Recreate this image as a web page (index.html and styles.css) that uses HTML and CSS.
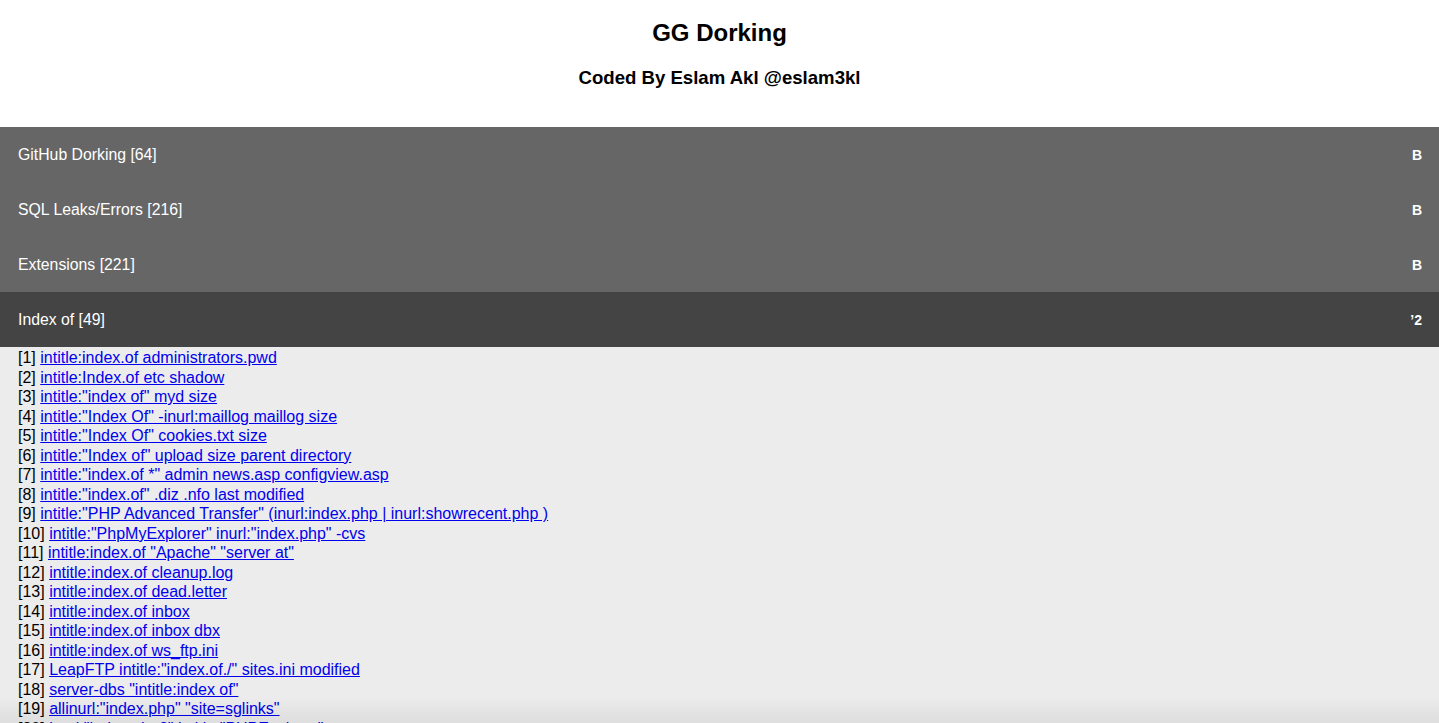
FILE: index.html
```html
<!DOCTYPE html>
<html>
<head>
<meta charset="utf-8">
<title>GG Dorking</title>
<link rel="stylesheet" href="styles.css">
</head>
<body>
<header class="header">
  <h2 class="title">GG Dorking</h2>
  <h3 class="subtitle">Coded By Eslam Akl @eslam3kl</h3>
</header>
<section class="accordion">
  <div class="acc-btn"><span>GitHub Dorking [64]</span><span class="acc-mark">B</span></div>
  <div class="acc-btn"><span>SQL Leaks/Errors [216]</span><span class="acc-mark">B</span></div>
  <div class="acc-btn"><span>Extensions [221]</span><span class="acc-mark">B</span></div>
  <div class="acc-btn active"><span>Index of [49]</span><span class="acc-mark">&rsquo;2</span></div>
  <div class="panel">
    <div class="row">[1] <a href="#">intitle:index.of administrators.pwd</a></div>
    <div class="row">[2] <a href="#">intitle:Index.of etc shadow</a></div>
    <div class="row">[3] <a href="#">intitle:"index of" myd size</a></div>
    <div class="row">[4] <a href="#">intitle:"Index Of" -inurl:maillog maillog size</a></div>
    <div class="row">[5] <a href="#">intitle:"Index Of" cookies.txt size</a></div>
    <div class="row">[6] <a href="#">intitle:"Index of" upload size parent directory</a></div>
    <div class="row">[7] <a href="#">intitle:"index.of *" admin news.asp configview.asp</a></div>
    <div class="row">[8] <a href="#">intitle:"index.of" .diz .nfo last modified</a></div>
    <div class="row">[9] <a href="#">intitle:"PHP Advanced Transfer" (inurl:index.php | inurl:showrecent.php )</a></div>
    <div class="row">[10] <a href="#">intitle:"PhpMyExplorer" inurl:"index.php" -cvs</a></div>
    <div class="row">[11] <a href="#">intitle:index.of "Apache" "server at"</a></div>
    <div class="row">[12] <a href="#">intitle:index.of cleanup.log</a></div>
    <div class="row">[13] <a href="#">intitle:index.of dead.letter</a></div>
    <div class="row">[14] <a href="#">intitle:index.of inbox</a></div>
    <div class="row">[15] <a href="#">intitle:index.of inbox dbx</a></div>
    <div class="row">[16] <a href="#">intitle:index.of ws_ftp.ini</a></div>
    <div class="row">[17] <a href="#">LeapFTP intitle:"index.of./" sites.ini modified</a></div>
    <div class="row">[18] <a href="#">server-dbs "intitle:index of"</a></div>
    <div class="row">[19] <a href="#">allinurl:"index.php" "site=sglinks"</a></div>
    <div class="row">[20] <a href="#">inurl:"index.php?" intitle:"PHPExplorer" -cvs</a></div>
    <div class="row">[21] <a href="#">intitle:index.of .bash_history</a></div>
  </div>
</section>
<div class="bottom-shade"></div>
</body>
</html>
```
FILE: styles.css
```css
html, body {
  margin: 0;
  padding: 0;
  background: #fff;
  font-family: "Liberation Sans", Arial, Helvetica, sans-serif;
  color: #000;
}

.header {
  display: flex;
  flex-direction: column;
  align-items: center;
  padding: 19px 0 38px;
}

.title {
  margin: 0;
  font-size: 24px;
  line-height: 28px;
  font-weight: bold;
}

.subtitle {
  margin: 20px 0 0;
  font-size: 18.6px;
  line-height: 22px;
  font-weight: bold;
}

.accordion {
  display: flex;
  flex-direction: column;
}

.acc-btn {
  display: flex;
  align-items: center;
  justify-content: space-between;
  height: 55px;
  padding: 0 17px 0 18px;
  background: #666;
  color: #fff;
  font-size: 15.8px;
}

.acc-btn.active {
  background: #444;
}

.acc-mark {
  font-weight: bold;
  font-size: 14px;
}

.panel {
  background: #ececec;
  padding: 1px 18px 10px;
  font-size: 16px;
  line-height: 19.5px;
}

.panel a {
  color: #0000ee;
  text-decoration: underline;
}

.bottom-shade {
  position: fixed;
  left: 0;
  right: 0;
  bottom: 0;
  height: 26px;
  background: linear-gradient(to bottom, rgba(0,0,0,0), rgba(0,0,0,0.06));
  pointer-events: none;
}
```
